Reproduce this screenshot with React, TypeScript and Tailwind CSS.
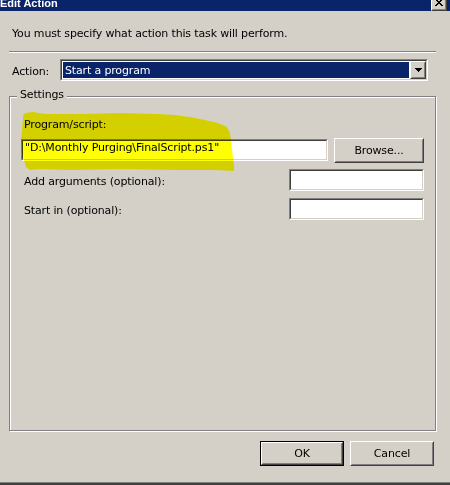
import React from "react";

function Sunken({ className = "", children }: { className?: string; children?: React.ReactNode }) {
  return (
    <div className={`border border-t-[#808080] border-l-[#808080] border-b-white border-r-white ${className}`}>
      <div className="h-full w-full border border-t-[#404040] border-l-[#404040] border-b-[#d4d0c8] border-r-[#d4d0c8] bg-white">
        {children}
      </div>
    </div>
  );
}

function Raised({ className = "", children }: { className?: string; children?: React.ReactNode }) {
  return (
    <div className={`border border-t-white border-l-white border-b-[#404040] border-r-[#404040] bg-[#d4d0c8] ${className}`}>
      <div className="flex h-full w-full items-center justify-center border border-t-[#d4d0c8] border-l-[#d4d0c8] border-b-[#808080] border-r-[#808080]">
        {children}
      </div>
    </div>
  );
}

export default function App() {
  return (
    <div className="relative flex h-[485px] w-[450px] flex-col overflow-hidden bg-[#d4d0c8] font-[DejaVu_Sans,Liberation_Sans,sans-serif] text-[11px] leading-[13px] tracking-[-0.15px] text-black">
      {/* Title bar */}
      <div className="flex h-[11px] shrink-0 items-end justify-between overflow-hidden bg-[#0a246a]">
        <div className="-mt-[2px] self-start font-[Liberation_Sans,Arial,sans-serif] text-[11px] font-bold leading-[11px] tracking-normal text-white">
          Edit Action
        </div>
        <Raised className="mr-[3px] h-[14px] w-[16px] shrink-0">
          <svg width="8" height="7" viewBox="0 0 8 7" className="mb-[3px]" shapeRendering="crispEdges">
            <path
              fill="#000"
              d="M0 0h2v1H0zM6 0h2v1H6zM1 1h2v1H1zM5 1h2v1H5zM2 2h4v1H2zM3 3h2v1H3zM2 4h4v1H2zM1 5h2v1H1zM5 5h2v1H5zM0 6h2v1H0zM6 6h2v1H6z"
            />
          </svg>
        </Raised>
      </div>

      <div className="ml-[12px] mt-[16px]">You must specify what action this task will perform.</div>

      <div className="ml-[9px] mt-[11px] h-[2px] w-[427px] border-t border-b border-t-[#808080] border-b-white" />

      {/* Action row */}
      <div className="ml-[12px] mt-[6px] flex items-start">
        <div className="mt-[6px] w-[48px]">Action:</div>
        <Sunken className="h-[22px] w-[368px]">
          <div className="flex h-full">
            <div className="m-[1px] flex flex-1 items-center bg-[#0a246a] pl-[2px] text-white">Start a program</div>
            <Raised className="h-full w-[16px]">
              <svg width="7" height="4" viewBox="0 0 7 4" shapeRendering="crispEdges">
                <path fill="#000" d="M0 0h7L3.5 4z" />
              </svg>
            </Raised>
          </div>
        </Sunken>
      </div>

      {/* Settings group */}
      <div className="relative ml-[9px] mt-[15px] h-[335px] w-[427px] shrink-0 border border-[#808080] shadow-[inset_1px_1px_0_#fff,1px_1px_0_#fff]">
        <div className="absolute left-[7px] top-[-9px] bg-[#d4d0c8] px-[3px]">Settings</div>

        <div className="ml-[14px] mt-[21px]">Program/script:</div>

        <div className="mt-[7px] flex items-start">
          <Sunken className="ml-[11px] mt-[1px] h-[22px] w-[307px]">
            <div className="pl-[2px]">{'"D:\\Monthly Purging\\FinalScript.ps1"'}</div>
          </Sunken>
          <Raised className="ml-[6px] h-[25px] w-[90px]">Browse...</Raised>
        </div>

        <div className="mt-[6px] flex items-start justify-between pr-[11px]">
          <div className="ml-[14px] mt-[6px]">Add arguments (optional):</div>
          <Sunken className="h-[22px] w-[135px]" />
        </div>

        <div className="mt-[7px] flex items-start justify-between pr-[11px]">
          <div className="ml-[14px] mt-[6px]">Start in (optional):</div>
          <Sunken className="h-[22px] w-[135px]" />
        </div>
      </div>

      {/* Buttons */}
      <div className="mt-[10px] flex justify-end gap-[6px] pr-[16px]">
        <div className="h-[25px] w-[84px] border border-black">
          <Raised className="h-full w-full">OK</Raised>
        </div>
        <Raised className="h-[25px] w-[84px]">Cancel</Raised>
      </div>

      <div className="mt-auto h-[1px] shrink-0 bg-[#808080]" />
      <div className="h-[2px] shrink-0 bg-[#404040]" />

      {/* Highlighter marker */}
      <svg
        className="pointer-events-none absolute left-0 top-0 mix-blend-multiply"
        width="450"
        height="485"
        viewBox="0 0 450 485"
      >
        <polygon
          fill="#ffff00"
          points="23,116 25,113 33,112 45,114 80,114 120,113 157,114 175,115 190,117 205,120 218,123 227,127 230,133 231,141 232,150 233,158 234,165 234,171 215,170 180,170 120,169 70,170 40,169 30,170 26,167 24,160 22,152 21,140 22,130 23,120"
        />
      </svg>
    </div>
  );
}
